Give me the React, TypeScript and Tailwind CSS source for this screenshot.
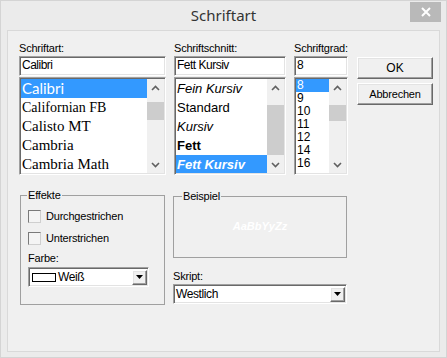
import React from 'react'

const sunken =
  'border border-t-[#a0a0a0] border-l-[#a0a0a0] border-r-white border-b-white shadow-[inset_1px_1px_0_#696969,inset_-1px_-1px_0_#e3e3e3] p-[1px] bg-white'
const raised =
  'border border-t-white border-l-white border-r-[#696969] border-b-[#696969] shadow-[inset_-1px_-1px_0_#a0a0a0,inset_1px_1px_0_#e3e3e3] bg-[#f0f0f0]'

function Chevron({ up }: { up?: boolean }) {
  return (
    <svg width="9" height="6" viewBox="0 0 9 6">
      <polyline
        points={up ? '1,5 4.5,1.5 8,5' : '1,1 4.5,4.5 8,1'}
        fill="none"
        stroke="#606060"
        strokeWidth="1.6"
      />
    </svg>
  )
}

function ScrollBar({ thumb }: { thumb: string }) {
  return (
    <div className="flex w-[17px] shrink-0 flex-col bg-[#f0f0f0]">
      <div className="flex h-[17px] items-center justify-center">
        <Chevron up />
      </div>
      <div className="flex-1">
        <div className={thumb} />
      </div>
      <div className="flex h-[17px] items-center justify-center">
        <Chevron />
      </div>
    </div>
  )
}

function DropButton() {
  return (
    <div className={`flex h-[15px] w-[15px] items-center justify-center ${raised}`}>
      <svg width="7" height="4" viewBox="0 0 7 4">
        <polygon points="0,0 7,0 3.5,4" fill="#000" />
      </svg>
    </div>
  )
}

function Label({ children }: { children: React.ReactNode }) {
  return <div className="h-[14px] text-[11px] leading-[13px] tracking-[-0.2px]">{children}</div>
}

function TextBox({ value }: { value: string }) {
  return (
    <div className={`h-[20px] ${sunken}`}>
      <div className="pl-[1px] text-[12px] leading-[15px] tracking-[-0.5px]">{value}</div>
    </div>
  )
}

function CheckRow({ label }: { label: string }) {
  return (
    <div className="flex h-[22px] items-center">
      <div className="h-[13px] w-[13px] border border-t-[#7a7a7a] border-l-[#7a7a7a] border-r-[#cfcfcf] border-b-[#cfcfcf] bg-[#f4f4f4]" />
      <span className="ml-[5px] text-[11px] tracking-[-0.2px]">{label}</span>
    </div>
  )
}

export default function App() {
  return (
    <div className="flex h-[358px] w-[447px] flex-col border border-[#d4d4d4] bg-[#ebebeb] font-['Liberation_Sans',Arial,sans-serif] text-black">
      <div className="relative flex h-[29px] shrink-0 items-center justify-center">
        <span className="font-['Noto_Sans',sans-serif] text-[15px] text-[#333]">Schriftart</span>
        <div className="absolute right-[5px] top-[1px] flex h-[20px] w-[31px] items-center justify-center bg-[#b9b9b9]">
          <svg width="10" height="10" viewBox="0 0 10 10">
            <path d="M1 1 L9 9 M9 1 L1 9" stroke="#fff" strokeWidth="2" />
          </svg>
        </div>
      </div>

      <div className="mx-[6px] h-[322px] border border-[#d9d9d9] bg-[#f0f0f0] pl-[11px] pt-[11px]">
        {/* top row */}
        <div className="flex">
          <div className="w-[147px]">
            <Label>Schriftart:</Label>
            <TextBox value="Calibri" />
            <div className={`mt-[1px] flex h-[98px] overflow-hidden ${sunken}`}>
              <div className="flex-1 overflow-hidden">
                <div className="h-[19px] bg-[#3399ff] pl-[1px] font-['Lato',sans-serif] text-[15px] leading-[19px] text-white">
                  Calibri
                </div>
                <div className="h-[19px] pl-[1px] font-['Liberation_Serif',serif] text-[14px] leading-[19px]">
                  Californian FB
                </div>
                <div className="h-[19px] pl-[1px] font-['Liberation_Serif',serif] text-[15px] leading-[19px]">
                  Calisto MT
                </div>
                <div className="h-[19px] pl-[1px] font-['Liberation_Serif',serif] text-[15px] leading-[19px]">
                  Cambria
                </div>
                <div className="h-[19px] pl-[1px] font-['Liberation_Serif',serif] text-[15px] leading-[19px]">
                  Cambria Math
                </div>
              </div>
              <ScrollBar thumb="mt-[6px] h-[18px] bg-[#cdcdcd]" />
            </div>
          </div>

          <div className="ml-[8px] w-[112px]">
            <Label>Schriftschnitt:</Label>
            <TextBox value="Fett Kursiv" />
            <div className={`mt-[1px] flex h-[98px] overflow-hidden ${sunken}`}>
              <div className="flex-1 overflow-hidden text-[13px] leading-[19px]">
                <div className="h-[19px] pl-[1px] italic">Fein Kursiv</div>
                <div className="h-[19px] pl-[1px]">Standard</div>
                <div className="h-[19px] pl-[1px] italic">Kursiv</div>
                <div className="h-[19px] pl-[1px] font-bold">Fett</div>
                <div className="h-[19px] bg-[#3399ff] pl-[1px] font-bold italic text-white">Fett Kursiv</div>
              </div>
              <ScrollBar thumb="mt-[9px] h-[50px] bg-[#cdcdcd]" />
            </div>
          </div>

          <div className="ml-[8px] w-[54px]">
            <Label>Schriftgrad:</Label>
            <TextBox value="8" />
            <div className={`mt-[1px] flex h-[98px] overflow-hidden ${sunken}`}>
              <div className="flex-1 overflow-hidden text-[12px] leading-[13px]">
                <div className="h-[13px] bg-[#3399ff] pl-[1px] text-white">8</div>
                <div className="h-[13px] pl-[1px]">9</div>
                <div className="h-[13px] pl-[1px]">10</div>
                <div className="h-[13px] pl-[1px]">11</div>
                <div className="h-[13px] pl-[1px]">12</div>
                <div className="h-[13px] pl-[1px]">14</div>
                <div className="h-[13px] pl-[1px]">16</div>
              </div>
              <ScrollBar thumb="mt-[9px] h-[16px] bg-[#cdcdcd]" />
            </div>
          </div>

          <div className="ml-[9px] mt-[15px] flex w-[76px] flex-col gap-[4px]">
            <div className={`flex h-[22px] items-center justify-center text-[12px] ${raised}`}>OK</div>
            <div className={`flex h-[22px] items-center justify-center text-[11px] tracking-[-0.2px] ${raised}`}>
              Abbrechen
            </div>
          </div>
        </div>

        {/* bottom row */}
        <div className="mt-[14px] flex">
          <fieldset className="ml-[1px] h-[116px] w-[145px] border border-[#a0a0a0]">
            <legend className="ml-[6px] px-[1px] text-[11px] leading-[13px] tracking-[-0.2px]">Effekte</legend>
            <div className="pl-[7px]">
              <div className="mt-[3px]">
                <CheckRow label="Durchgestrichen" />
                <CheckRow label="Unterstrichen" />
              </div>
              <div className="mt-[3px] h-[15px] text-[11px] leading-[13px] tracking-[-0.2px]">Farbe:</div>
              <div className={`flex h-[20px] w-[121px] items-center ${sunken}`}>
                <div className="ml-[2px] h-[9px] w-[24px] border border-black bg-white" />
                <span className="ml-[2px] flex-1 text-[12px] tracking-[-0.4px]">Weiß</span>
                <DropButton />
              </div>
            </div>
          </fieldset>

          <div className="ml-[8px] flex w-[174px] flex-col">
            <fieldset className="mt-[1px] flex h-[68px] w-[174px] items-center justify-center border border-[#a0a0a0]">
              <legend className="ml-[8px] px-[1px] text-[11px] leading-[13px] tracking-[-0.2px]">Beispiel</legend>
              <div className="flex h-[46px] items-center justify-center text-[11px] font-bold italic text-white">
                AaBbYyZz
              </div>
            </fieldset>
            <div className="mt-[12px]">
              <Label>Skript:</Label>
            </div>
            <div className={`flex h-[20px] items-center ${sunken}`}>
              <span className="ml-[1px] flex-1 text-[12px] tracking-[-0.4px]">Westlich</span>
              <DropButton />
            </div>
          </div>
        </div>
      </div>
    </div>
  )
}
